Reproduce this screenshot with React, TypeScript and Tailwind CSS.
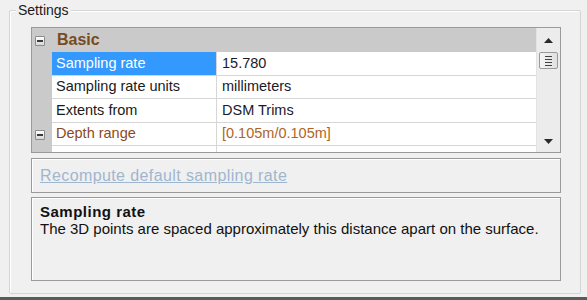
import React from "react";

const Minus = () => (
  <div className="w-[10px] h-[10px] border border-[#8a8a8a] bg-gradient-to-b from-white to-[#d8d8d8] flex items-center justify-center rounded-[1px]">
    <div className="w-[6px] h-[2px] bg-[#3a3a3a]" />
  </div>
);

type Row = { name: string; value: string; selected?: boolean; brown?: boolean; cat?: boolean; h: string };

const rows: Row[] = [
  { name: "Sampling rate", value: "15.780", selected: true, h: "h-[24px]" },
  { name: "Sampling rate units", value: "millimeters", h: "h-[23px]" },
  { name: "Extents from", value: "DSM Trims", h: "h-[24px]" },
  { name: "Depth range", value: "[0.105m/0.105m]", brown: true, cat: true, h: "h-[23px]" },
  { name: "", value: "", h: "h-[23px]" },
];

export default function App() {
  return (
    <div
      className="w-[587px] h-[300px] bg-[#f0f0f0] relative overflow-hidden text-[14.5px] text-black"
      style={{ fontFamily: '"Liberation Sans", Arial, sans-serif' }}
    >
      <div className="pt-[10px] pl-[9px] pr-[6px]">
        <div className="relative h-[284px] border border-[#d5d5d5] rounded-[2px] shadow-[inset_1px_1px_0_#fff] pl-[21px] pr-[19px] pt-[16px] flex flex-col">
          <span className="absolute -top-[9px] left-[6px] bg-[#f0f0f0] px-[2px] leading-[16px] text-[14px] text-[#1a1a1a]">
            Settings
          </span>
          {/* property grid */}
          <div className="h-[126px] border border-[#9a9a9a] bg-white flex overflow-hidden">
            <div className="flex-1 flex flex-col overflow-hidden">
              <div className="h-[24px] shrink-0 bg-[#cacaca] flex items-center">
                <div className="w-[20px] flex justify-start pl-[3px] pt-px">
                  <Minus />
                </div>
                <span className="pl-[5px] font-bold text-[16px] text-[#7a4a1c]">Basic</span>
              </div>
              {rows.map((r, i) => (
                <div key={i} className={`${r.h} shrink-0 flex`}>
                  <div className="w-[20px] shrink-0 bg-[#cacaca] flex items-center justify-start pl-[3px]">
                    {r.cat && <Minus />}
                  </div>
                  <div
                    className={`w-[165px] shrink-0 border-b border-r border-[#d6d6d6] flex items-center pl-[4px] ${
                      r.selected ? "bg-[#3399ff] text-white" : r.brown ? "text-[#8b4a20]" : "text-[#1a1a1a]"
                    }`}
                  >
                    {r.name}
                  </div>
                  <div
                    className={`flex-1 border-b border-[#d6d6d6] flex items-center pl-[5px] ${
                      r.brown ? "text-[#b0651e]" : "text-[#1a1a2a]"
                    }`}
                  >
                    {r.value}
                  </div>
                </div>
              ))}
            </div>
            {/* scrollbar */}
            <div className="w-[24px] shrink-0 bg-[#ececec] border-l border-[#e2e2e2] flex flex-col items-center">
              <div className="h-[24px] w-full flex items-center justify-center">
                <svg width="9" height="5" viewBox="0 0 9 5">
                  <path d="M0 5 L4.5 0 L9 5 Z" fill="#2a2a2a" />
                </svg>
              </div>
              <div className="w-[19px] h-[17px] border border-[#9a9a9a] rounded-[2px] bg-gradient-to-r from-[#f4f4f4] to-[#e0e0e0] flex flex-col items-center justify-center gap-[2px]">
                <div className="w-[7px] h-px bg-[#444]" />
                <div className="w-[7px] h-px bg-[#444]" />
                <div className="w-[7px] h-px bg-[#444]" />
                <div className="w-[7px] h-px bg-[#444]" />
              </div>
              <div className="flex-1" />
              <div className="h-[22px] w-full flex items-center justify-center">
                <svg width="9" height="5" viewBox="0 0 9 5">
                  <path d="M0 0 L9 0 L4.5 5 Z" fill="#2a2a2a" />
                </svg>
              </div>
            </div>
          </div>
          {/* command pane */}
          <div className="mt-[5px] h-[35px] border border-[#9a9a9a] shadow-[inset_1px_1px_0_#fff] flex items-center pl-[8px]">
            <span className="underline text-[16px] tracking-[0.4px] text-[#9fb6cf] decoration-[#9fb6cf]">
              Recompute default sampling rate
            </span>
          </div>
          {/* description */}
          <div className="mt-[4px] h-[84px] border border-[#9a9a9a] shadow-[inset_1px_1px_0_#fff] pl-[8px] pt-[5px] text-[#111] text-[15px]">
            <div className="font-bold leading-[17px] tracking-[0.5px]">Sampling rate</div>
            <div className="leading-[17px]">The 3D points are spaced approximately this distance apart on the surface.</div>
          </div>
        </div>
      </div>
      <div className="absolute left-0 right-0 bottom-0 h-[3px] bg-[#5a5a5a]" />
    </div>
  );
}
